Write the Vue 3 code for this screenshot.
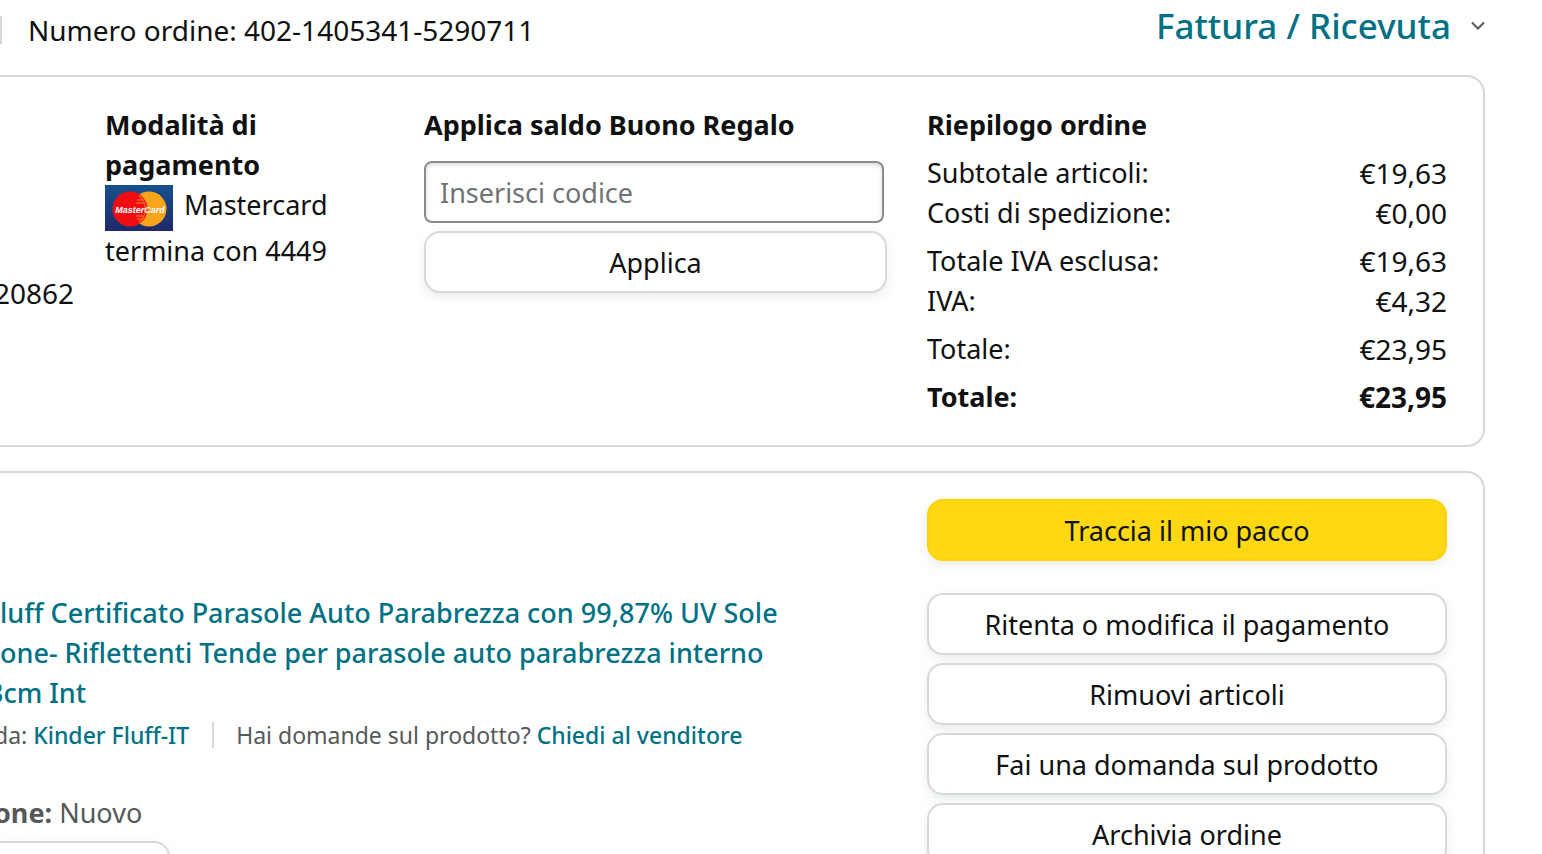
<script setup>
import { ref } from 'vue'

const code = ref('')

const summary = [
  { label: 'Subtotale articoli:', value: '€19,63', spaced: true },
  { label: 'Costi di spedizione:', value: '€0,00' },
  { label: 'Totale IVA esclusa:', value: '€19,63', spaced: true },
  { label: 'IVA:', value: '€4,32' },
  { label: 'Totale:', value: '€23,95', spaced: true },
  { label: 'Totale:', value: '€23,95', spaced: true, strong: true },
]

const actions = [
  'Ritenta o modifica il pagamento',
  'Rimuovi articoli',
  'Fai una domanda sul prodotto',
  'Archivia ordine',
]
</script>

<template>
  <main class="page">
    <header class="top">
      <p class="order-number">Numero ordine: 402-1405341-5290711</p>
      <a class="invoice" href="#">
        Fattura / Ricevuta
        <svg class="chevron" viewBox="0 0 14 10" aria-hidden="true">
          <path d="M1 1.5 L7 7.5 L13 1.5" fill="none" stroke="#565959" stroke-width="2" />
        </svg>
      </a>
    </header>

    <section class="panel details">
      <div class="address"><p class="cut">20862</p></div>

      <div class="payment">
        <h2>Modalità di pagamento</h2>
        <p>
          <svg class="card-logo" viewBox="0 0 68 46" role="img" aria-label="Carta">
            <defs>
              <linearGradient id="card-bg" x1="0" y1="0" x2="0" y2="1">
                <stop offset="0" stop-color="#16508c" />
                <stop offset="1" stop-color="#20296b" />
              </linearGradient>
            </defs>
            <rect width="68" height="46" fill="url(#card-bg)" />
            <circle cx="44" cy="24" r="17.5" fill="#f9a51a" />
            <circle cx="25" cy="24" r="17.5" fill="#f00d12" />
            <path
              d="M34 10.5 A17.5 17.5 0 0 1 34 37.500 M32 15h7 M31 18h9 M31 31h9 M32 34h7"
              fill="none"
              stroke="#f4601c"
              stroke-width="1.500"
            />
            <text class="card-name" x="35" y="28" text-anchor="middle">MasterCard</text>
          </svg>
          Mastercard termina con 4449
        </p>
      </div>

      <form class="gift" @submit.prevent>
        <h2><label for="gift-code">Applica saldo Buono Regalo</label></h2>
        <input id="gift-code" v-model="code" type="text" placeholder="Inserisci codice" />
        <button class="btn" type="submit">Applica</button>
      </form>

      <div class="summary">
        <h2>Riepilogo ordine</h2>
        <table>
          <tbody>
            <tr
              v-for="(row, i) in summary"
              :key="i"
              :class="{ spaced: row.spaced, strong: row.strong }"
            >
              <th scope="row">{{ row.label }}</th>
              <td>{{ row.value }}</td>
            </tr>
          </tbody>
        </table>
      </div>
    </section>

    <section class="panel shipment">
      <div class="product">
        <a class="title" href="#">
          <span>luff Certificato Parasole Auto Parabrezza con 99,87% UV Sole</span>
          <span>one- Riflettenti Tende per parasole auto parabrezza interno</span>
          <span class="cut">3cm Int</span>
        </a>
        <p class="seller cut">
          <span>da: <a href="#">Kinder Fluff-IT</a></span>
          <span class="question">Hai domande sul prodotto? <a href="#">Chiedi al venditore</a></span>
        </p>
        <p class="condition cut"><b>one:</b> Nuovo</p>
        <button class="btn again" type="button" aria-label="Acquista di nuovo"></button>
      </div>
      <div class="actions">
        <button class="btn primary" type="button">Traccia il mio pacco</button>
        <button v-for="a in actions" :key="a" class="btn" type="button">{{ a }}</button>
      </div>
    </section>
  </main>
</template>

<style>
body {
  margin: 0;
  background: #fff;
}
</style>

<style scoped>
.page {
  box-sizing: border-box;
  height: 100vh;
  overflow: hidden;
  padding-right: 57px;
  color: #0f1111;
  font-family: "Noto Sans", "Open Sans", sans-serif;
  font-size: 27px;
  line-height: 40px;
}
.page *,
.page *::before {
  box-sizing: border-box;
}
p,
h2 {
  margin: 0;
}
h2 {
  font-size: 27px;
  font-weight: 700;
}
a {
  color: #007185;
  font-weight: 500;
  text-decoration: none;
}
.top {
  display: flex;
  justify-content: space-between;
  align-items: flex-start;
  height: 75px;
}
.order-number {
  margin-top: 16px;
  padding-left: 26px;
  border-left: 2px solid #d5d9d9;
  font-size: 28px;
  line-height: 28px;
}
.invoice {
  display: flex;
  align-items: center;
  gap: 20px;
  font-size: 35px;
  line-height: 52px;
}
.chevron {
  width: 14px;
  height: 10px;
}
.panel {
  display: grid;
  padding-right: 36px;
  border: 2px solid #d5d9d9;
  border-left: 0;
  border-radius: 0 18px 18px 0;
}
.details {
  grid-template-columns: 105fr 319fr 503fr 520fr;
  padding-top: 28px;
  padding-bottom: 28px;
}
.details > * {
  min-width: 0;
}
.address {
  padding-top: 168px;
  font-size: 28px;
}
.cut {
  margin-left: -6px;
}
.title .cut {
  margin-left: -12px;
}
.payment {
  padding-right: 60px;
}
.card-logo {
  width: 68px;
  height: 46px;
  margin-right: 4px;
  vertical-align: top;
}
.card-name {
  fill: #fff;
  font-family: "Liberation Sans", sans-serif;
  font-size: 9px;
  font-style: italic;
  font-weight: 700;
}
.gift {
  display: flex;
  flex-direction: column;
  gap: 8px;
  padding-right: 40px;
}
.gift input {
  width: calc(100% - 3px);
  height: 62px;
  margin-top: 8px;
  padding: 0 14px;
  border: 2px solid #888c8c;
  border-radius: 8px;
  background: #fff;
  box-shadow: inset 0 2px 4px rgba(15, 17, 17, 0.15);
  color: #0f1111;
  font: inherit;
}
.gift input::placeholder {
  color: #6f7373;
  opacity: 1;
}
.btn {
  width: 100%;
  height: 62px;
  padding: 2px 20px 0;
  border: 2px solid #d5d9d9;
  border-radius: 16px;
  background: #fff;
  box-shadow: 0 4px 10px rgba(213, 217, 217, 0.5);
  color: #0f1111;
  font: inherit;
  text-align: center;
}
.primary {
  margin-bottom: 24px;
  border-color: #fcd200;
  background: #ffd814;
}
table {
  width: 100%;
  border-collapse: collapse;
}
th,
td {
  padding: 0;
  font-weight: 400;
  text-align: left;
}
td {
  font-size: 28px;
  text-align: right;
}
.spaced > * {
  padding-top: 8px;
}
.strong > * {
  font-weight: 700;
}
.shipment {
  grid-template-columns: 927fr 520fr;
  margin-top: 24px;
  padding-top: 26px;
  padding-bottom: 28px;
}
.product {
  padding-top: 94px;
  white-space: nowrap;
}
.title span {
  display: block;
}
.seller {
  display: flex;
  align-items: center;
  gap: 23px;
  padding-top: 2px;
  color: #565959;
  font-size: 23px;
}
.question {
  display: flex;
  gap: 6px;
  align-items: center;
}
.question::before {
  content: "";
  width: 2px;
  height: 26px;
  margin-right: 16px;
  background: #d5d9d9;
}
.condition {
  margin-top: 38px;
  color: #565959;
}
.again {
  display: block;
  width: 170px;
  margin-top: 8px;
  border-left: 0;
  border-radius: 0 16px 16px 0;
}
.actions {
  display: flex;
  flex-direction: column;
  gap: 8px;
}
</style>
